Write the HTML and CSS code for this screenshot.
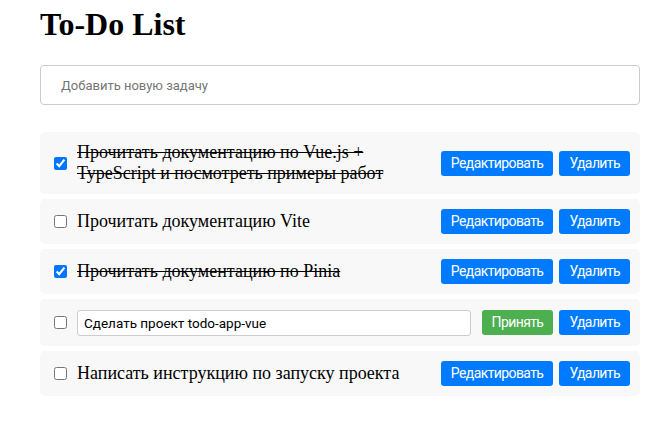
FILE: index.html
```html
<!DOCTYPE html>
<html lang="ru">
<head>
<meta charset="utf-8">
<title>To-Do List</title>
<link rel="stylesheet" href="styles.css">
</head>
<body>
<div class="app">
  <h1 class="title">To-Do List</h1>
  <input class="new-task" type="text" placeholder="Добавить новую задачу">
  <ul class="list">
    <li class="item">
      <input class="check" type="checkbox" checked>
      <span class="text done">Прочитать документацию по Vue.js + TypeScript и посмотреть примеры работ</span>
      <button class="btn btn-blue">Редактировать</button>
      <button class="btn btn-blue">Удалить</button>
    </li>
    <li class="item">
      <input class="check" type="checkbox">
      <span class="text">Прочитать документацию Vite</span>
      <button class="btn btn-blue">Редактировать</button>
      <button class="btn btn-blue">Удалить</button>
    </li>
    <li class="item">
      <input class="check" type="checkbox" checked>
      <span class="text done">Прочитать документацию по Pinia</span>
      <button class="btn btn-blue">Редактировать</button>
      <button class="btn btn-blue">Удалить</button>
    </li>
    <li class="item">
      <input class="check" type="checkbox">
      <input class="edit" type="text" value="Сделать проект todo-app-vue">
      <button class="btn btn-green">Принять</button>
      <button class="btn btn-blue">Удалить</button>
    </li>
    <li class="item">
      <input class="check" type="checkbox">
      <span class="text">Написать инструкцию по запуску проекта</span>
      <button class="btn btn-blue">Редактировать</button>
      <button class="btn btn-blue">Удалить</button>
    </li>
  </ul>
</div>
</body>
</html>
```

FILE: styles.css
```css
html, body {
  margin: 0;
  padding: 0;
  background: #fff;
}

.app {
  width: 600px;
  margin-left: 40px;
  font-family: "Liberation Serif", "Times New Roman", serif;
}

.title {
  font-family: "Liberation Serif", "Times New Roman", serif;
  font-size: 32px;
  font-weight: bold;
  line-height: 37px;
  margin: 6px 0 22px;
  color: #000;
}

.new-task {
  display: block;
  box-sizing: border-box;
  width: 600px;
  height: 40px;
  padding: 0 20px;
  border: 1px solid #ccc;
  border-radius: 4px;
  font-family: Roboto, "Liberation Sans", sans-serif;
  font-size: 13px;
  color: #000;
  outline: none;
}

.new-task::placeholder {
  color: #757575;
}

.list {
  list-style: none;
  margin: 27px 0 0;
  padding: 0;
  display: flex;
  flex-direction: column;
  gap: 5px;
}

.item {
  display: flex;
  align-items: center;
  background: #f8f8f8;
  border-radius: 5px;
  padding: 10px;
  min-height: 25px;
}

.check {
  width: 13px;
  height: 13px;
  margin: 0 10px 0 4px;
  flex: none;
}

.text {
  flex: 1;
  font-size: 18px;
  line-height: 21px;
  color: #000;
  padding-right: 20px;
}

.text.done {
  text-decoration: line-through;
}

.edit {
  flex: 1;
  box-sizing: border-box;
  height: 26px;
  margin: 0.5px 11px 0.5px 0;
  padding: 0 6px;
  border: 1px solid #ccc;
  border-radius: 3px;
  font-family: Roboto, "Liberation Sans", sans-serif;
  font-size: 13.5px;
  color: #000;
  background: #fff;
}

.btn {
  flex: none;
  border: none;
  border-radius: 3px;
  padding: 5px 10px;
  line-height: 15px;
  font-family: Roboto, "Liberation Sans", sans-serif;
  font-size: 14px;
  letter-spacing: -0.6px;
  color: #fff;
  cursor: pointer;
}

.btn + .btn {
  margin-left: 6px;
}

.btn-blue {
  background: #007bff;
}

.btn-green {
  background: #4caf50;
}
```
